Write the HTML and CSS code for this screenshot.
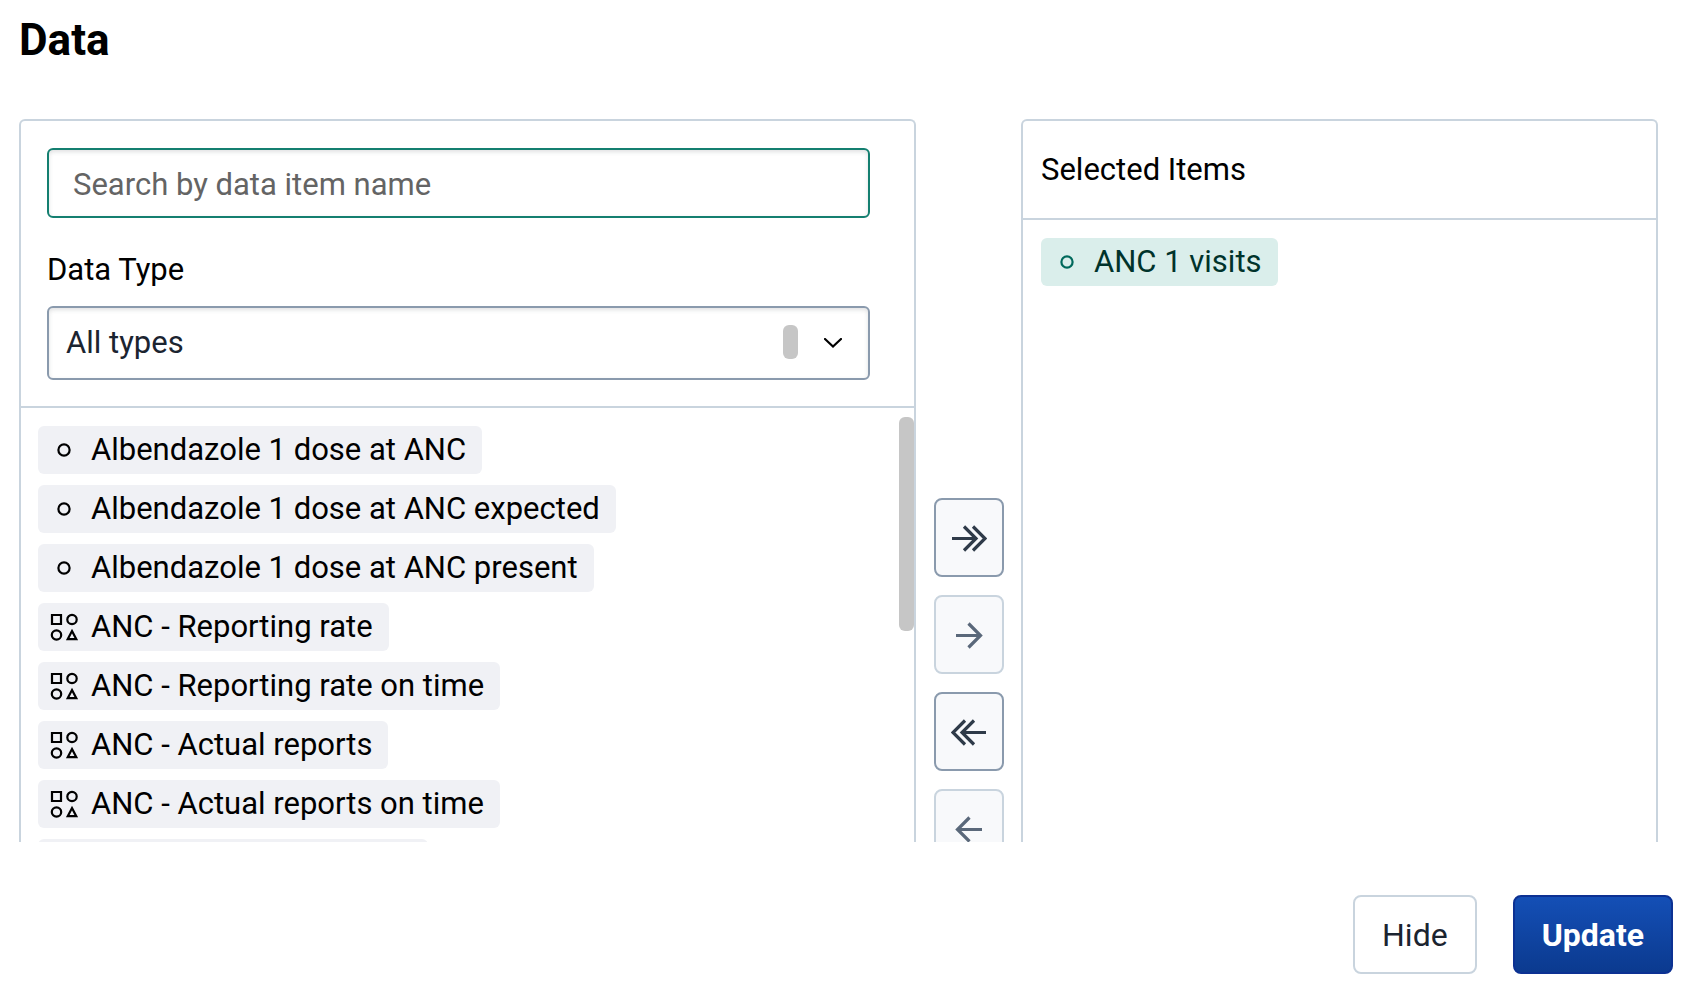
FILE: index.html
```html
<!DOCTYPE html>
<html lang="en">
<head>
<meta charset="utf-8">
<title>Data</title>
<link rel="stylesheet" href="styles.css">
</head>
<body>
<svg class="sprite" aria-hidden="true">
  <symbol id="dot" viewBox="0 0 28 28"><circle cx="14" cy="14" r="5.6" fill="none" stroke="currentColor" stroke-width="2.200"/></symbol>
  <symbol id="shapes" viewBox="0 0 28 28"><g fill="none" stroke="currentColor" stroke-width="2.200"><path d="M2 2h9v9H2z"/><circle cx="22" cy="6.5" r="4.7"/><circle cx="6.5" cy="22" r="4.7"/><path d="M22 18l4.3 8.2h-8.6z"/></g></symbol>
  <symbol id="one" viewBox="0 0 36 36"><path d="M5 18.500h23M17.500 6.500l12 12-12 12" fill="none" stroke="currentColor" stroke-width="3.200"/></symbol>
  <symbol id="two" viewBox="0 0 36 36"><path d="M1 18.500h24M13 6.500l12 12-12 12M22 6.500l12 12-12 12" fill="none" stroke="currentColor" stroke-width="3.200"/></symbol>
</svg>
<main class="page">
  <h1 class="title">Data</h1>
  <div class="content">
    <div class="transfer">
      <section class="panel">
        <div class="filters">
          <input class="search" type="text" placeholder="Search by data item name" aria-label="Search by data item name">
          <label class="label" for="type">Data Type</label>
          <div class="select-wrap">
            <select class="select" id="type"><option>All types</option></select>
            <span class="select-bar"></span>
            <svg class="chevron" viewBox="0 0 18 10" aria-hidden="true"><path d="M1 1l8 7.500 8-7.500" fill="none" stroke="#000" stroke-width="2.200" stroke-linecap="round"/></svg>
          </div>
        </div>
        <div class="list-wrap">
          <ul class="list">
            <li class="item"><svg class="icon"><use href="#dot"/></svg>Albendazole 1 dose at ANC</li>
            <li class="item"><svg class="icon"><use href="#dot"/></svg>Albendazole 1 dose at ANC expected</li>
            <li class="item"><svg class="icon"><use href="#dot"/></svg>Albendazole 1 dose at ANC present</li>
            <li class="item"><svg class="icon"><use href="#shapes"/></svg>ANC - Reporting rate</li>
            <li class="item"><svg class="icon"><use href="#shapes"/></svg>ANC - Reporting rate on time</li>
            <li class="item"><svg class="icon"><use href="#shapes"/></svg>ANC - Actual reports</li>
            <li class="item"><svg class="icon"><use href="#shapes"/></svg>ANC - Actual reports on time</li>
            <li class="item item-pending"></li>
          </ul>
          <span class="scroll-thumb"></span>
        </div>
      </section>
      <div class="actions">
        <button class="move" type="button" aria-label="Add all"><svg class="arrow"><use href="#two"/></svg></button>
        <button class="move" type="button" aria-label="Add selected" disabled><svg class="arrow"><use href="#one"/></svg></button>
        <button class="move" type="button" aria-label="Remove all"><svg class="arrow flip"><use href="#two"/></svg></button>
        <button class="move" type="button" aria-label="Remove selected" disabled><svg class="arrow flip"><use href="#one"/></svg></button>
      </div>
      <section class="panel">
        <h2 class="selected-title">Selected Items</h2>
        <ul class="list">
          <li class="item chosen"><svg class="icon"><use href="#dot"/></svg>ANC 1 visits</li>
        </ul>
      </section>
    </div>
  </div>
  <footer class="footer">
    <button class="btn" type="button">Hide</button>
    <button class="btn primary" type="button">Update</button>
  </footer>
</main>
</body>
</html>
```
FILE: styles.css
```css
* { box-sizing: border-box; }
body {
  margin: 0;
  background: #fff;
  color: #000;
  font: 31px/36px Roboto, sans-serif;
}
input, select, button { font: inherit; }
.sprite { position: absolute; width: 0; height: 0; }
.page { display: flex; flex-direction: column; height: 100vh; }
.title {
  margin: 0;
  padding: 14px 19px 53px;
  font-size: 44px;
  line-height: 52px;
  font-weight: 700;
}
.content { flex: 1; min-height: 0; overflow: hidden; padding: 0 36px 0 19px; }
.transfer {
  display: grid;
  grid-template-columns: 897fr 105px 637fr;
  min-height: 100%;
}
.panel { border: 2px solid #c9d4de; border-bottom: 0; border-radius: 6px 6px 0 0; }
.filters {
  display: flex;
  flex-direction: column;
  padding: 27px 44px 26px 26px;
  border-bottom: 2px solid #c9d4de;
}
.search {
  width: 100%;
  height: 70px;
  padding: 2px 24px 0;
  border: 2px solid #147f70;
  border-radius: 6px;
  outline: 0;
  background: #fff;
  box-shadow: inset 0 2px 4px rgba(48, 54, 60, 0.15);
}
.search::placeholder { color: #646464; opacity: 1; }
.label { padding: 34px 0 18px; }
.select-wrap { position: relative; }
.select {
  display: block;
  width: 100%;
  height: 74px;
  padding: 0 90px 0 17px;
  appearance: none;
  border: 2px solid #8a9aad;
  border-radius: 6px;
  background: #fff;
  color: #1b2430;
  box-shadow: inset 0 2px 4px rgba(48, 54, 60, 0.15);
}
.select-bar {
  position: absolute;
  top: 19px;
  right: 72px;
  width: 15px;
  height: 34px;
  border-radius: 6px;
  background: #c6c6c6;
}
.chevron { position: absolute; top: 32px; right: 28px; width: 18px; height: 10px; }
.list-wrap { position: relative; }
.scroll-thumb {
  position: absolute;
  top: 9px;
  right: 0;
  width: 15px;
  height: 214px;
  border-radius: 6px;
  background: #c6c6c6;
}
.list {
  display: flex;
  flex-direction: column;
  align-items: flex-start;
  gap: 11px;
  margin: 0;
  padding: 18px 17px;
  list-style: none;
}
.panel:last-child .list { padding-left: 18px; }
.item {
  display: flex;
  align-items: center;
  gap: 13px;
  height: 48px;
  padding: 0 16px 0 12px;
  border-radius: 6px;
  background: #f0f1f5;
  white-space: nowrap;
}
.item-pending { width: 390px; }
.icon { width: 28px; height: 28px; }
.chosen { background: #daeeeb; color: #00332b; }
.chosen .icon { color: #00695c; }
.actions {
  display: flex;
  flex-direction: column;
  align-items: center;
  gap: 18px;
  padding-top: 379px;
}
.move {
  display: flex;
  align-items: center;
  justify-content: center;
  width: 70px;
  height: 79px;
  padding: 0;
  border: 2px solid #8a9aad;
  border-radius: 8px;
  background: #f8f9fb;
  color: #2f3b49;
}
.move:disabled { border-color: #c9d4de; color: #5a687a; }
.arrow { width: 36px; height: 36px; }
.flip { transform: scaleX(-1); }
.selected-title {
  margin: 0;
  padding: 31px 18px 30px;
  border-bottom: 2px solid #c9d4de;
  font-size: 31px;
  font-weight: 400;
}
.footer {
  display: flex;
  justify-content: flex-end;
  gap: 36px;
  padding: 53px 21px 12px;
}
.btn {
  height: 79px;
  padding: 0 27px;
  border: 2px solid #c9d4de;
  border-radius: 8px;
  background: #fff;
  color: #1b2430;
  font-size: 32px;
}
.primary {
  border-color: #0c3193;
  background: linear-gradient(#144fb6, #0b3a8f);
  color: #fff;
  font-weight: 700;
}
```
